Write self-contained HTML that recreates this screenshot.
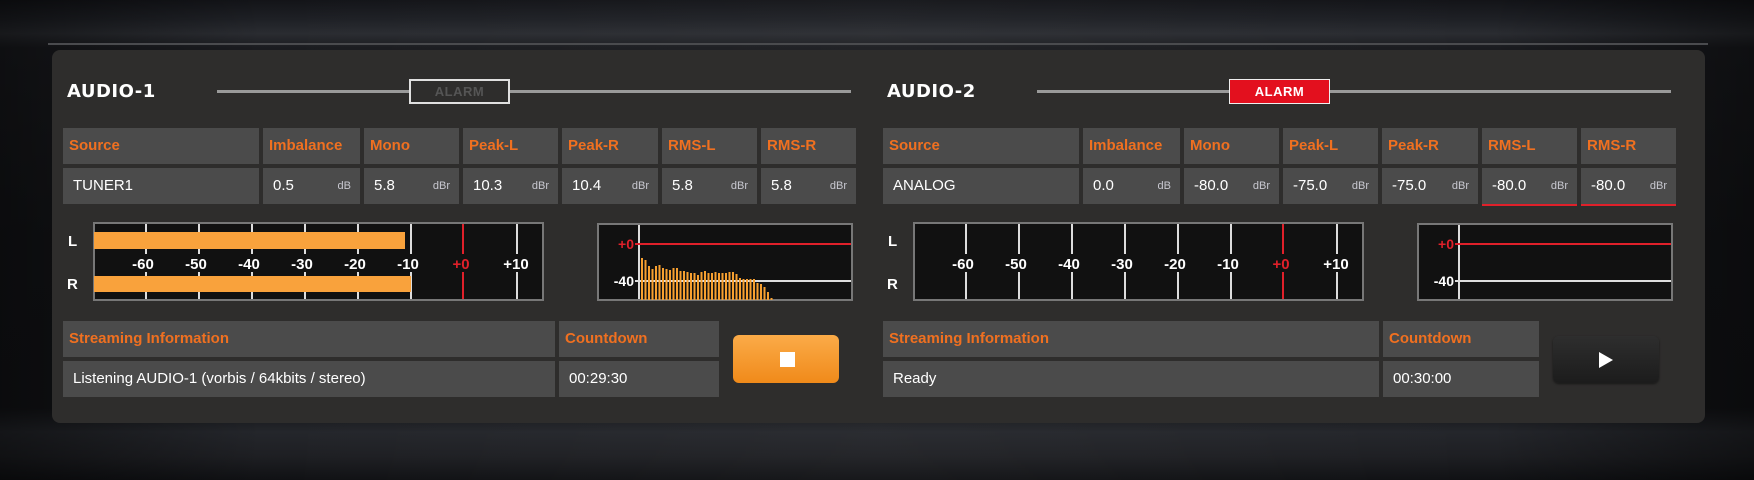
<!DOCTYPE html>
<html><head><meta charset="utf-8"><style>
*{margin:0;padding:0;box-sizing:border-box}
body{width:1754px;height:480px;overflow:hidden;position:relative;font-family:"Liberation Sans","DejaVu Sans",sans-serif;
background:linear-gradient(180deg,#131418 0%,#1e2025 4%,#2a2c31 7%,#1a1b1f 10%,#141518 50%,#131417 85%,#24262b 90%,#1e1f23 95%,#101114 100%);}
.bgx{position:absolute;left:0;top:0;width:1754px;height:480px;background:linear-gradient(90deg,rgba(0,0,0,.45) 0%,rgba(0,0,0,0) 15%,rgba(255,255,255,.03) 50%,rgba(0,0,0,0) 85%,rgba(0,0,0,.45) 100%)}
.topline{position:absolute;left:48px;top:43px;width:1660px;height:2px;background:#4a4b4e}
.panel{position:absolute;left:52px;top:50px;width:1653px;height:373px;background:#2e2d2c;border-radius:8px}
.a{position:absolute}
.title{font-family:"DejaVu Sans",sans-serif;font-weight:bold;font-size:18px;color:#fff;letter-spacing:.5px}
.line{height:3px;background:#9a9a9a}
.c{position:absolute;background:#4b4b4b;height:36px}
.h{color:#f07020;font-weight:bold;font-size:15px;line-height:36px;padding-left:6px}
.v{color:#fff;font-size:15px;line-height:36px;padding-left:10px}
.u{position:absolute;right:9px;top:0;font-size:11px;color:#c8c8d0;line-height:37px}
.meter{position:absolute;background:#111;border:2px solid #777}
.lbl{position:absolute;font-weight:bold;font-size:15px;color:#fff}
</style></head><body>
<div class="bgx"></div>
<div class="topline"></div>
<div class="panel"></div>

<!-- AUDIO-1 -->
<div class="a title" style="left:67px;top:81px">AUDIO-1</div>
<div class="a line" style="left:217px;top:90px;width:634px"></div>
<div class="a" style="left:409px;top:79px;width:101px;height:25px;border:2px solid #e0e0e0;background:#2e2d2c;color:#555;font-weight:bold;font-size:13px;text-align:center;line-height:21px;letter-spacing:.5px">ALARM</div>

<div class="c h" style="left:63px;top:128px;width:196px">Source</div>
<div class="c h" style="left:263px;top:128px;width:97px">Imbalance</div>
<div class="c h" style="left:364px;top:128px;width:95px">Mono</div>
<div class="c h" style="left:463px;top:128px;width:95px">Peak-L</div>
<div class="c h" style="left:562px;top:128px;width:96px">Peak-R</div>
<div class="c h" style="left:662px;top:128px;width:95px">RMS-L</div>
<div class="c h" style="left:761px;top:128px;width:95px">RMS-R</div>
<div class="c v" style="left:63px;top:168px;width:196px">TUNER1</div>
<div class="c v" style="left:263px;top:168px;width:97px">0.5<span class="u">dB</span></div>
<div class="c v" style="left:364px;top:168px;width:95px">5.8<span class="u">dBr</span></div>
<div class="c v" style="left:463px;top:168px;width:95px">10.3<span class="u">dBr</span></div>
<div class="c v" style="left:562px;top:168px;width:96px">10.4<span class="u">dBr</span></div>
<div class="c v" style="left:662px;top:168px;width:95px">5.8<span class="u">dBr</span></div>
<div class="c v" style="left:761px;top:168px;width:95px">5.8<span class="u">dBr</span></div>

<!-- meter left -->
<div class="lbl" style="left:68px;top:233px">L</div>
<div class="lbl" style="left:67px;top:276px">R</div>
<svg class="a" style="left:93px;top:222px" width="451" height="79">
<rect x="1" y="1" width="449" height="77" fill="#111" stroke="#777" stroke-width="2"/>
<g stroke="#ddd" stroke-width="2"><line x1="53" y1="2" x2="53" y2="77"/><line x1="106" y1="2" x2="106" y2="77"/><line x1="159" y1="2" x2="159" y2="77"/><line x1="212" y1="2" x2="212" y2="77"/><line x1="265" y1="2" x2="265" y2="77"/><line x1="318" y1="2" x2="318" y2="77"/><line x1="424" y1="2" x2="424" y2="77"/></g>
<line x1="370" y1="2" x2="370" y2="77" stroke="#e0202a" stroke-width="2"/>
<rect x="1" y="10" width="311" height="17" fill="#f9a23c"/>
<rect x="1" y="54" width="317" height="16" fill="#f9a23c"/>
<g font-family="Liberation Sans,sans-serif" font-weight="bold" font-size="15" fill="#fff" text-anchor="middle">
<rect x="25" y="32" width="400" height="18" fill="#111"/>
<text x="50" y="47">-60</text><text x="103" y="47">-50</text><text x="156" y="47">-40</text><text x="209" y="47">-30</text><text x="262" y="47">-20</text><text x="315" y="47">-10</text><text x="368" y="47" fill="#e0202a">+0</text><text x="423" y="47">+10</text></g>
</svg>

<!-- spectrum left -->
<svg class="a" style="left:597px;top:223px" width="256" height="78">
<rect x="1" y="1" width="254" height="76" fill="#111" stroke="#777" stroke-width="2"/>
<line x1="42" y1="2" x2="42" y2="76" stroke="#ddd" stroke-width="2"/>
<line x1="38" y1="21" x2="254" y2="21" stroke="#e0202a" stroke-width="2"/>
<line x1="38" y1="58" x2="254" y2="58" stroke="#ddd" stroke-width="2"/>
<g fill="#f7a030" id="bars"></g>
<g font-family="Liberation Sans,sans-serif" font-weight="bold" font-size="14" text-anchor="end"><text x="37" y="26" fill="#e0202a">+0</text><text x="37" y="63" fill="#fff">-40</text></g>
</svg>

<div class="c h" style="left:63px;top:321px;width:492px">Streaming Information</div>
<div class="c h" style="left:559px;top:321px;width:160px">Countdown</div>
<div class="c v" style="left:63px;top:361px;width:492px">Listening AUDIO-1 (vorbis / 64kbits / stereo)</div>
<div class="c v" style="left:559px;top:361px;width:160px">00:29:30</div>
<div class="a" style="left:733px;top:335px;width:106px;height:48px;border-radius:6px;background:linear-gradient(#fbab48,#f08a1a)"></div>
<div class="a" style="left:780px;top:352px;width:15px;height:15px;background:#fff"></div>

<!-- AUDIO-2 -->
<div class="a title" style="left:887px;top:81px">AUDIO-2</div>
<div class="a line" style="left:1037px;top:90px;width:634px"></div>
<div class="a" style="left:1229px;top:79px;width:101px;height:25px;border:1px solid #eee;background:#e3101e;color:#fff;font-weight:bold;font-size:13px;text-align:center;line-height:23px;letter-spacing:.5px">ALARM</div>

<div class="c h" style="left:883px;top:128px;width:196px">Source</div>
<div class="c h" style="left:1083px;top:128px;width:97px">Imbalance</div>
<div class="c h" style="left:1184px;top:128px;width:95px">Mono</div>
<div class="c h" style="left:1283px;top:128px;width:95px">Peak-L</div>
<div class="c h" style="left:1382px;top:128px;width:96px">Peak-R</div>
<div class="c h" style="left:1482px;top:128px;width:95px">RMS-L</div>
<div class="c h" style="left:1581px;top:128px;width:95px">RMS-R</div>
<div class="c v" style="left:883px;top:168px;width:196px">ANALOG</div>
<div class="c v" style="left:1083px;top:168px;width:97px">0.0<span class="u">dB</span></div>
<div class="c v" style="left:1184px;top:168px;width:95px">-80.0<span class="u">dBr</span></div>
<div class="c v" style="left:1283px;top:168px;width:95px">-75.0<span class="u">dBr</span></div>
<div class="c v" style="left:1382px;top:168px;width:96px">-75.0<span class="u">dBr</span></div>
<div class="c v" style="left:1482px;top:168px;width:95px;border-bottom:2px solid #e0202a;height:38px">-80.0<span class="u">dBr</span></div>
<div class="c v" style="left:1581px;top:168px;width:95px;border-bottom:2px solid #e0202a;height:38px">-80.0<span class="u">dBr</span></div>

<div class="lbl" style="left:888px;top:233px">L</div>
<div class="lbl" style="left:887px;top:276px">R</div>
<svg class="a" style="left:913px;top:222px" width="451" height="79">
<rect x="1" y="1" width="449" height="77" fill="#111" stroke="#777" stroke-width="2"/>
<g stroke="#ddd" stroke-width="2"><line x1="53" y1="2" x2="53" y2="77"/><line x1="106" y1="2" x2="106" y2="77"/><line x1="159" y1="2" x2="159" y2="77"/><line x1="212" y1="2" x2="212" y2="77"/><line x1="265" y1="2" x2="265" y2="77"/><line x1="318" y1="2" x2="318" y2="77"/><line x1="424" y1="2" x2="424" y2="77"/></g>
<line x1="370" y1="2" x2="370" y2="77" stroke="#e0202a" stroke-width="2"/>
<g font-family="Liberation Sans,sans-serif" font-weight="bold" font-size="15" fill="#fff" text-anchor="middle">
<rect x="25" y="32" width="400" height="18" fill="#111"/>
<text x="50" y="47">-60</text><text x="103" y="47">-50</text><text x="156" y="47">-40</text><text x="209" y="47">-30</text><text x="262" y="47">-20</text><text x="315" y="47">-10</text><text x="368" y="47" fill="#e0202a">+0</text><text x="423" y="47">+10</text></g>
</svg>
<svg class="a" style="left:1417px;top:223px" width="256" height="78">
<rect x="1" y="1" width="254" height="76" fill="#111" stroke="#777" stroke-width="2"/>
<line x1="42" y1="2" x2="42" y2="76" stroke="#ddd" stroke-width="2"/>
<line x1="38" y1="21" x2="254" y2="21" stroke="#e0202a" stroke-width="2"/>
<line x1="38" y1="58" x2="254" y2="58" stroke="#ddd" stroke-width="2"/>
<g font-family="Liberation Sans,sans-serif" font-weight="bold" font-size="14" text-anchor="end"><text x="37" y="26" fill="#e0202a">+0</text><text x="37" y="63" fill="#fff">-40</text></g>
</svg>

<div class="c h" style="left:883px;top:321px;width:496px">Streaming Information</div>
<div class="c h" style="left:1383px;top:321px;width:156px">Countdown</div>
<div class="c v" style="left:883px;top:361px;width:496px">Ready</div>
<div class="c v" style="left:1383px;top:361px;width:156px">00:30:00</div>
<div class="a" style="left:1553px;top:336px;width:106px;height:47px;border-radius:6px;background:linear-gradient(#2e2e2e,#1c1c1c);box-shadow:0 1px 2px rgba(0,0,0,.5)"></div>
<svg class="a" style="left:1598px;top:351px" width="16" height="18"><path d="M1 1 L15 9 L1 17 Z" fill="#fff"/></svg>

<svg class="a" style="left:597px;top:223px" width="256" height="78">
<g fill="#f7a030">
<rect x="44" y="35" width="2" height="42"/><rect x="47.5" y="37" width="2" height="40"/><rect x="51" y="43" width="2" height="34"/><rect x="54.5" y="46" width="2" height="31"/><rect x="58" y="43" width="2" height="34"/><rect x="61.5" y="42" width="2" height="35"/><rect x="65" y="45" width="2" height="32"/><rect x="68.5" y="46" width="2" height="31"/><rect x="72" y="47" width="2" height="30"/><rect x="75.5" y="45" width="2" height="32"/><rect x="79" y="45" width="2" height="32"/><rect x="82.5" y="48" width="2" height="29"/><rect x="86" y="48" width="2" height="29"/><rect x="89.5" y="49" width="2" height="28"/><rect x="93" y="50" width="2" height="27"/><rect x="96.5" y="50" width="2" height="27"/><rect x="100" y="52" width="2" height="25"/><rect x="103.5" y="49" width="2" height="28"/><rect x="107" y="48" width="2" height="29"/><rect x="110.5" y="50" width="2" height="27"/><rect x="114" y="50" width="2" height="27"/><rect x="117.5" y="49" width="2" height="28"/><rect x="121" y="50" width="2" height="27"/><rect x="124.5" y="50" width="2" height="27"/><rect x="128" y="50" width="2" height="27"/><rect x="131.5" y="49" width="2" height="28"/><rect x="135" y="49" width="2" height="28"/><rect x="138.5" y="51" width="2" height="26"/><rect x="142" y="55" width="2" height="22"/><rect x="145.5" y="56" width="2" height="21"/><rect x="149" y="56" width="2" height="21"/><rect x="152.5" y="56" width="2" height="21"/><rect x="156" y="56" width="2" height="21"/><rect x="159.5" y="60" width="2" height="17"/><rect x="163" y="61" width="2" height="16"/><rect x="166.5" y="64" width="2" height="13"/><rect x="170" y="69" width="2" height="8"/><rect x="173.5" y="75" width="2" height="2"/>
</g></svg>
</body></html>
